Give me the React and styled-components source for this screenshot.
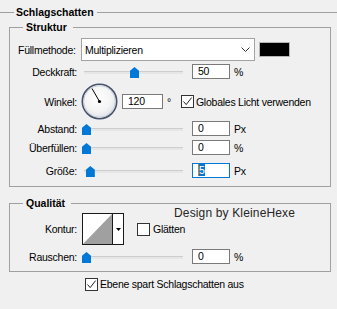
import React from "react";
import styled, { createGlobalStyle } from "styled-components";

const GlobalStyle = createGlobalStyle`
  html, body {
    margin: 0;
    padding: 0;
    background: #f0f0f0;
  }
  body {
    font-family: "Liberation Sans", Arial, sans-serif;
    font-size: 10.5px;
    letter-spacing: -0.25px;
    color: #000;
  }
`;

const Page = styled.div`
  position: relative;
  width: 337px;
  height: 309px;
  overflow: hidden;
  background: #f0f0f0;
`;

const Header = styled.div`
  display: flex;
  align-items: flex-start;
  height: 21px;
`;

const Rule = styled.div`
  margin-top: 12px;
  border-top: 1px solid #a0a0a0;
  width: ${(p) => (p.$w ? `${p.$w}px` : "auto")};
  flex: ${(p) => (p.$w ? "none" : 1)};
`;

const HeaderTitle = styled.span`
  font-weight: bold;
  letter-spacing: 0;
  line-height: 13px;
  margin: 6px 3px 0 2px;
`;

const Group = styled.fieldset`
  margin: ${(p) => p.$mt}px 6px 0 9px;
  padding: 0 0 ${(p) => p.$pb}px 0;
  border: 1px solid #a0a0a0;
  min-inline-size: 0;
`;

const Legend = styled.legend`
  font-weight: bold;
  letter-spacing: 0;
  line-height: 13px;
  margin-left: 13px;
  padding: 0 6px 0 3px;
`;

const Row = styled.div`
  display: flex;
  align-items: center;
  height: ${(p) => p.$h}px;
  margin-top: ${(p) => p.$mt}px;
`;

const Label = styled.span`
  flex: none;
  width: ${(p) => p.$w || 67}px;
  margin-right: ${(p) => p.$gap ?? 5}px;
  padding-left: ${(p) => p.$pl || 0}px;
  text-align: ${(p) => (p.$left ? "left" : "right")};
  white-space: nowrap;
  box-sizing: border-box;
`;

const Select = styled.div`
  flex: none;
  width: 174px;
  height: 23px;
  box-sizing: border-box;
  border: 1px solid #a3a3a3;
  background: #fff;
  display: flex;
  align-items: center;
  justify-content: space-between;
  padding: 0 4px 0 3px;
`;

const Swatch = styled.div`
  flex: none;
  width: 31px;
  height: 15px;
  margin-left: 4px;
  box-sizing: border-box;
  border: 1px solid #b5b5b5;
  background: #000;
`;

const SliderWrap = styled.div`
  position: relative;
  flex: none;
  width: 110px;
  height: 15px;
  display: flex;
  align-items: center;
`;

const Track = styled.div`
  margin: 1px 0 0 2px;
  width: 99px;
  height: 3px;
  box-sizing: border-box;
  background: #e6e6e6;
  border-top: 1px solid #cdcdcd;
`;

const Thumb = styled.div`
  position: absolute;
  top: 3px;
  width: 9px;
  height: 11px;
  background: #0078d7;
  clip-path: polygon(50% 0, 100% 35%, 100% 100%, 0 100%, 0 35%);
`;

const NumBox = styled.div`
  flex: none;
  width: ${(p) => p.$w || 38}px;
  height: 15px;
  box-sizing: border-box;
  border: 1px solid ${(p) => (p.$focus ? "#0078d7" : "#7a7a7a")};
  background: #fff;
  padding-left: 5px;
  line-height: 13px;
`;

const Selected = styled.span`
  background: #0078d7;
  color: #fff;
  border-left: 1px solid #e07a1f;
`;

const Unit = styled.span`
  margin-left: 4px;
`;

const CheckWrap = styled.label`
  display: flex;
  align-items: center;
  margin-left: ${(p) => p.$ml || 0}px;
  white-space: nowrap;
`;

const Box = styled.span`
  flex: none;
  width: 13px;
  height: 13px;
  box-sizing: border-box;
  border: 1px solid #333;
  background: #fff;
  margin-right: ${(p) => p.$gap ?? 2}px;
  display: flex;
`;

const Contour = styled.div`
  flex: none;
  width: 42px;
  height: 32px;
  box-sizing: border-box;
  border: 1px solid #1a1a1a;
  background: #fff;
  display: flex;
`;

const ContourArrow = styled.div`
  flex: 1;
  border-left: 1px solid #1a1a1a;
  display: flex;
  align-items: center;
  justify-content: center;
`;

const Watermark = styled.div`
  position: absolute;
  left: 174px;
  top: 206px;
  font-size: 12px;
  letter-spacing: 0.15px;
  line-height: 14px;
  color: #262626;
`;

const Check = ({ checked }) => (
  <svg width="11" height="11" viewBox="0 0 11 11">
    {checked && (
      <path d="M1.5 5.5 L4.2 8.6 L9.6 1.6" fill="none" stroke="#222" strokeWidth="1" />
    )}
  </svg>
);

const CheckBox = ({ checked, children, ml, gap }) => (
  <CheckWrap $ml={ml}>
    <Box $gap={gap}>
      <Check checked={checked} />
    </Box>
    {children}
  </CheckWrap>
);

const Slider = ({ pct }) => (
  <SliderWrap>
    <Track />
    <Thumb style={{ left: `${pct * 96}px` }} />
  </SliderWrap>
);

const Dial = ({ angle }) => {
  const r = (angle * Math.PI) / 180;
  const cx = 18.5;
  const cy = 18.5;
  return (
    <svg width="37" height="37" viewBox="0 0 37 37" style={{ flex: "none", marginRight: 4 }}>
      <defs>
        <radialGradient id="dialFill" cx="45%" cy="40%" r="65%">
          <stop offset="0" stopColor="#ffffff" />
          <stop offset="0.6" stopColor="#f4f4f4" />
          <stop offset="1" stopColor="#d9dce2" />
        </radialGradient>
      </defs>
      <circle cx={cx} cy={cy} r="17.2" fill="url(#dialFill)" stroke="#47526c" strokeWidth="1.6" />
      <circle cx={cx} cy={cy} r="15.8" fill="none" stroke="#c3c8d3" strokeWidth="0.8" />
      <line
        x1={cx}
        y1={cy}
        x2={cx + 15 * Math.cos(r)}
        y2={cy - 15 * Math.sin(r)}
        stroke="#000"
        strokeWidth="1"
      />
      <circle cx={cx} cy={cy} r="1.6" fill="#000" />
    </svg>
  );
};

const SliderRow = ({ label, pct, value, unit, mt, focus }) => (
  <Row $h={15} $mt={mt}>
    <Label>{label}</Label>
    <Slider pct={pct} />
    <NumBox $focus={focus}>{focus ? <Selected>{value}</Selected> : value}</NumBox>
    <Unit>{unit}</Unit>
  </Row>
);

export default function App() {
  return (
    <Page>
      <GlobalStyle />
      <Header>
        <Rule $w={14} />
        <HeaderTitle>Schlagschatten</HeaderTitle>
        <Rule />
      </Header>

      <Group $mt={0} $pb={8}>
        <Legend>Struktur</Legend>
        <Row $h={23} $mt={4}>
          <Label $left $pl={8} $w={71} $gap={0}>
            Füllmethode:
          </Label>
          <Select>
            <span>Multiplizieren</span>
            <svg width="9" height="5" viewBox="0 0 9 5">
              <path d="M0.5 0.5 L4.5 4.5 L8.5 0.5" fill="none" stroke="#333" strokeWidth="1" />
            </svg>
          </Select>
          <Swatch />
        </Row>
        <SliderRow label="Deckkraft:" pct={0.5} value="50" unit="%" mt={3} />
        <Row $h={37} $mt={4}>
          <Label $gap={4}>Winkel:</Label>
          <Dial angle={120} />
          <NumBox $w={41}>120</NumBox>
          <Unit>°</Unit>
          <CheckBox checked ml={10}>
            Globales Licht verwenden
          </CheckBox>
        </Row>
        <SliderRow label="Abstand:" pct={0} value="0" unit="Px" mt={1} />
        <SliderRow label="Überfüllen:" pct={0} value="0" unit="%" mt={4} />
        <SliderRow label="Größe:" pct={0.04} value="5" unit="Px" mt={8} focus />
      </Group>

      <Group $mt={10} $pb={7}>
        <Legend>Qualität</Legend>
        <Row $h={32} $mt={3}>
          <Label>Kontur:</Label>
          <Contour>
            <svg width="29" height="30" viewBox="0 0 29 30">
              <path d="M0 30 L29 0 L29 30 Z" fill="#a0a0a0" />
            </svg>
            <ContourArrow>
              <svg width="5" height="3" viewBox="0 0 5 3">
                <path d="M0 0 L5 0 L2.5 3 Z" fill="#000" />
              </svg>
            </ContourArrow>
          </Contour>
          <CheckBox ml={13} gap={3}>
            Glätten
          </CheckBox>
        </Row>
        <SliderRow label="Rauschen:" pct={0} value="0" unit="%" mt={4} />
      </Group>

      <Row $h={14} $mt={5}>
        <CheckBox checked ml={85}>
          Ebene spart Schlagschatten aus
        </CheckBox>
      </Row>

      <Watermark>Design by KleineHexe</Watermark>
    </Page>
  );
}
